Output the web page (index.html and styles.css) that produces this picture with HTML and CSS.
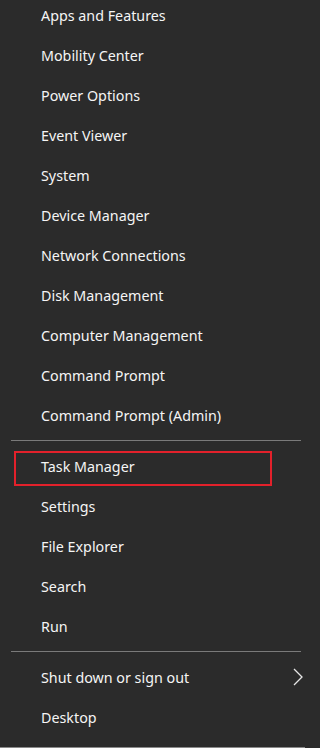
FILE: index.html
```html
<!DOCTYPE html>
<html>
<head>
<meta charset="utf-8">
<link rel="stylesheet" href="styles.css">
</head>
<body>
<div class="menu">
  <div class="group first">
    <div class="item">Apps and Features</div>
    <div class="item">Mobility Center</div>
    <div class="item">Power Options</div>
    <div class="item">Event Viewer</div>
    <div class="item">System</div>
    <div class="item">Device Manager</div>
    <div class="item">Network Connections</div>
    <div class="item">Disk Management</div>
    <div class="item">Computer Management</div>
    <div class="item">Command Prompt</div>
    <div class="item">Command Prompt (Admin)</div>
  </div>
  <div class="sep"></div>
  <div class="group">
    <div class="item highlighted">Task Manager<span class="mark"></span></div>
    <div class="item">Settings</div>
    <div class="item">File Explorer</div>
    <div class="item">Search</div>
    <div class="item">Run</div>
  </div>
  <div class="sep"></div>
  <div class="group">
    <div class="item has-sub">Shut down or sign out
      <svg class="chev" width="10" height="18" viewBox="0 0 10 18"><polyline points="1,1 9,9 1,17" fill="none" stroke="#e6e6e6" stroke-width="1.3"/></svg>
    </div>
    <div class="item">Desktop</div>
  </div>
  <div class="bottom"></div>
</div>
</body>
</html>
```

FILE: styles.css
```css
html, body {
  margin: 0;
  padding: 0;
  background: #2b2b2b;
}
body {
  width: 305px;
  height: 748px;
  overflow: hidden;
  font-family: "Noto Sans", "Open Sans", sans-serif;
}
.menu {
  display: flex;
  flex-direction: column;
}
.group {
  display: flex;
  flex-direction: column;
}
.group.first {
  margin-top: -5px;
}
.item {
  position: relative;
  height: 40px;
  display: flex;
  align-items: center;
  padding-left: 41px;
  color: #f5f5f5;
  font-size: 14.3px;
  white-space: nowrap;
}
.sep {
  height: 1px;
  background: #7a7a7a;
  margin: 5px 4px 5px 11px;
}
.mark {
  position: absolute;
  left: 14px;
  top: 5px;
  width: 258px;
  height: 35px;
  box-sizing: border-box;
  border: 2px solid #e3212b;
}
.chev {
  position: absolute;
  left: 293px;
  top: 11px;
}
.bottom {
  margin-top: 10px;
  height: 1px;
  background: #8a8a8a;
}
```
